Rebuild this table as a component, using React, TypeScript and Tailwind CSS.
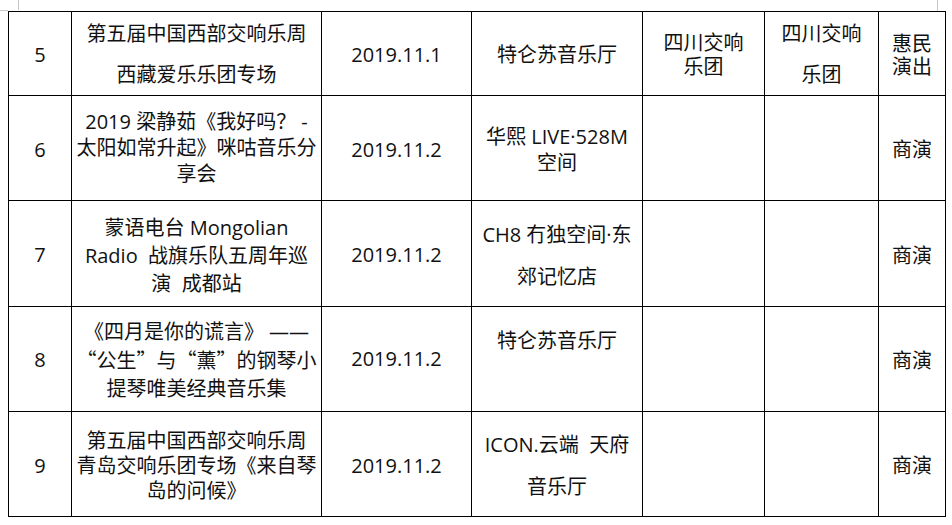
import React from "react";

type Cell = {
  lines?: React.ReactNode[];
  lh?: number; // line height in px
  pt?: string; // small nudge
};

type Row = {
  h: number;
  cells: Cell[];
};

// full-width CJK punctuation, the Latin face would draw them narrow
const Q = ({ children }: { children: React.ReactNode }) => (
  <span style={{ fontFamily: '"Noto Sans CJK SC", sans-serif' }}>{children}</span>
);

const rows: Row[] = [
  {
    h: 84,
    cells: [
      { lines: ["5"], pt: "pt-[3px]" },
      { lines: ["第五届中国西部交响乐周", "西藏爱乐乐团专场"], lh: 41 },
      { lines: ["2019.11.1"], pt: "pt-[3px]" },
      { lines: ["特仑苏音乐厅"], pt: "pt-[3px]" },
      { lines: ["四川交响", "乐团"], lh: 24, pt: "pt-[2px]" },
      { lines: ["四川交响", "乐团"], lh: 41 },
      { lines: ["惠民", "演出"], lh: 23, pt: "pt-[2px]" },
    ],
  },
  {
    h: 105,
    cells: [
      { lines: ["6"], pt: "pt-[4px]" },
      { lines: ["2019 梁静茹《我好吗？ -", "太阳如常升起》咪咕音乐分", "享会"], lh: 26 },
      { lines: ["2019.11.2"], pt: "pt-[3px]" },
      { lines: ["华熙 LIVE·528M", "空间"], lh: 26, pt: "pt-[4px]" },
      {},
      {},
      { lines: ["商演"], pt: "pt-[4px]" },
    ],
  },
  {
    h: 106,
    cells: [
      { lines: ["7"], pt: "pt-[2px]" },
      { lines: ["蒙语电台 Mongolian", "Radio  战旗乐队五周年巡", "演  成都站"], lh: 28, pt: "pt-[4px]" },
      { lines: ["2019.11.2"], pt: "pt-[2px]" },
      { lines: ["CH8 冇独空间·东", "郊记忆店"], lh: 42, pt: "pt-[4px]" },
      {},
      {},
      { lines: ["商演"], pt: "pt-[4px]" },
    ],
  },
  {
    h: 105,
    cells: [
      { lines: ["8"], pt: "pt-[2px]" },
      {
        lines: [
          "《四月是你的谎言》 ——",
          <>
            <Q>“</Q>公生<Q>”</Q>与<Q>“</Q>薰<Q>”</Q>的钢琴小
          </>,
          "提琴唯美经典音乐集",
        ],
        lh: 28,
        pt: "pt-[3px]",
      },
      { lines: ["2019.11.2"] },
      { lines: ["特仑苏音乐厅", " "], lh: 40, pt: "pt-[3px]" },
      {},
      {},
      { lines: ["商演"], pt: "pt-[3px]" },
    ],
  },
  {
    h: 105,
    cells: [
      { lines: ["9"], pt: "pt-[3px]" },
      { lines: ["第五届中国西部交响乐周", "青岛交响乐团专场《来自琴", "岛的问候》"], lh: 25, pt: "pt-[3px]" },
      { lines: ["2019.11.2"], pt: "pt-[3px]" },
      { lines: ["ICON.云端  天府", "音乐厅"], lh: 42, pt: "pt-[4px]" },
      {},
      {},
      { lines: ["商演"], pt: "pt-[3px]" },
    ],
  },
];

const colWidths = ["w-[63px]", "w-[250px]", "w-[150px]", "w-[171px]", "w-[122px]", "w-[114px]", "w-[67px]"];

export default function App() {
  return (
    <div
      className="relative w-[952px] h-[525px] bg-white overflow-hidden"
      style={{ fontFamily: '"Open Sans", "Noto Sans CJK SC", sans-serif' }}
    >
      {/* page corner marks of the word document */}
      <div className="absolute left-[18px] top-0 h-[10px] w-px bg-[#c8c8c8]" />
      <div className="absolute left-0 top-[10px] h-px w-[8px] bg-[#c8c8c8]" />
      <div className="absolute left-[937px] top-0 h-[11px] w-px bg-[#c8c8c8]" />

      <div className="pt-[11px] pl-[8px]">
        <table className="table-fixed border-collapse text-[20px] text-[#111] w-[938px]">
          <colgroup>
            {colWidths.map((w, i) => (
              <col key={i} className={w} />
            ))}
          </colgroup>
          <tbody>
            {rows.map((row, ri) => (
              <tr key={ri} style={{ height: row.h }}>
                {row.cells.map((c, ci) => (
                  <td key={ci} className="border-[1.5px] border-black p-0 align-middle text-center">
                    {c.lines && (
                      <div
                        className={`flex flex-col items-center ${c.pt ?? ""}`}
                        style={{ lineHeight: `${c.lh ?? 28}px` }}
                      >
                        {c.lines.map((l, li) => (
                          <div key={li} className="whitespace-pre">
                            {l}
                          </div>
                        ))}
                      </div>
                    )}
                  </td>
                ))}
              </tr>
            ))}
          </tbody>
        </table>
      </div>
    </div>
  );
}
